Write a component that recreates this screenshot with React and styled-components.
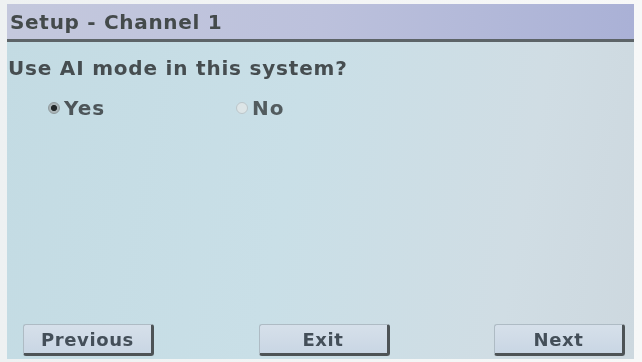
import React from "react";
import styled, { createGlobalStyle } from "styled-components";

const Global = createGlobalStyle`
  html, body { margin: 0; padding: 0; background: #f4f6f7; }
  body { width: 642px; height: 362px; overflow: hidden; font-family: "DejaVu Sans", "Liberation Sans", sans-serif; }
`;

const Frame = styled.div`
  width: 642px;
  height: 362px;
  box-sizing: border-box;
  padding: 4px 8px 3px 7px;
  background: linear-gradient(90deg, #eef1f2 0%, #f7f8f8 100%);
`;

const Screen = styled.div`
  height: 100%;
  display: flex;
  flex-direction: column;
  background: linear-gradient(100deg, #c3dbe3 0%, #c9dfe7 45%, #d0dde4 80%, #cdd8df 100%);
  filter: blur(0.5px);
`;

const Header = styled.div`
  height: 35px;
  display: flex;
  align-items: center;
  padding-left: 3px;
  background: linear-gradient(90deg, #c4c8dd 0%, #bcc1dc 50%, #aab1d6 100%);
  border-bottom: 3px solid #5d6468;
  color: #444a4b;
  font-size: 20px;
  font-weight: bold;
  letter-spacing: 0.7px;
`;

const Body = styled.div`
  flex: 1;
  display: flex;
  flex-direction: column;
  padding: 14px 0 0 1px;
`;

const Question = styled.div`
  font-size: 20px;
  font-weight: bold;
  line-height: 24px;
  color: #464d50;
  letter-spacing: 0.8px;
`;

const Options = styled.div`
  display: flex;
  margin-top: 16px;
  padding-left: 40px;
`;

const Option = styled.div`
  width: 188px;
  display: flex;
  align-items: center;
  gap: 4px;
  font-size: 20px;
  font-weight: bold;
  line-height: 24px;
  color: ${(p) => (p.$muted ? "#535c5f" : "#4d5559")};
  letter-spacing: 1px;
`;

const Dot = styled.span`
  width: 12px;
  height: 12px;
  border-radius: 50%;
  box-sizing: border-box;
  border: 1px solid ${(p) => (p.$on ? "#8f999c" : "#bcc6ca")};
  background: ${(p) => (p.$on ? "radial-gradient(circle, #23292a 0 38%, #aab4b7 50%)" : "#dde5e7")};
`;

const Spacer = styled.div`
  flex: 1;
`;

const Buttons = styled.div`
  display: flex;
  justify-content: space-between;
  padding: 0 9px 3px 15px;
`;

const Button = styled.div`
  width: 131px;
  height: 32px;
  box-sizing: border-box;
  display: flex;
  align-items: center;
  justify-content: center;
  background: linear-gradient(180deg, #d6e0ea 0%, #c9d6e4 100%);
  border: 1px solid #aebbc4;
  border-right: 3px solid #4d5356;
  border-bottom: 3px solid #4d5356;
  border-radius: 3px;
  font-size: 18px;
  font-weight: bold;
  color: #444f59;
  letter-spacing: 0.6px;
`;

export default function App() {
  return (
    <>
      <Global />
      <Frame>
        <Screen>
          <Header>Setup - Channel 1</Header>
          <Body>
            <Question>Use AI mode in this system?</Question>
            <Options>
              <Option><Dot $on />Yes</Option>
              <Option $muted><Dot />No</Option>
            </Options>
            <Spacer />
            <Buttons>
              <Button>Previous</Button>
              <Button>Exit</Button>
              <Button>Next</Button>
            </Buttons>
          </Body>
        </Screen>
      </Frame>
    </>
  );
}
